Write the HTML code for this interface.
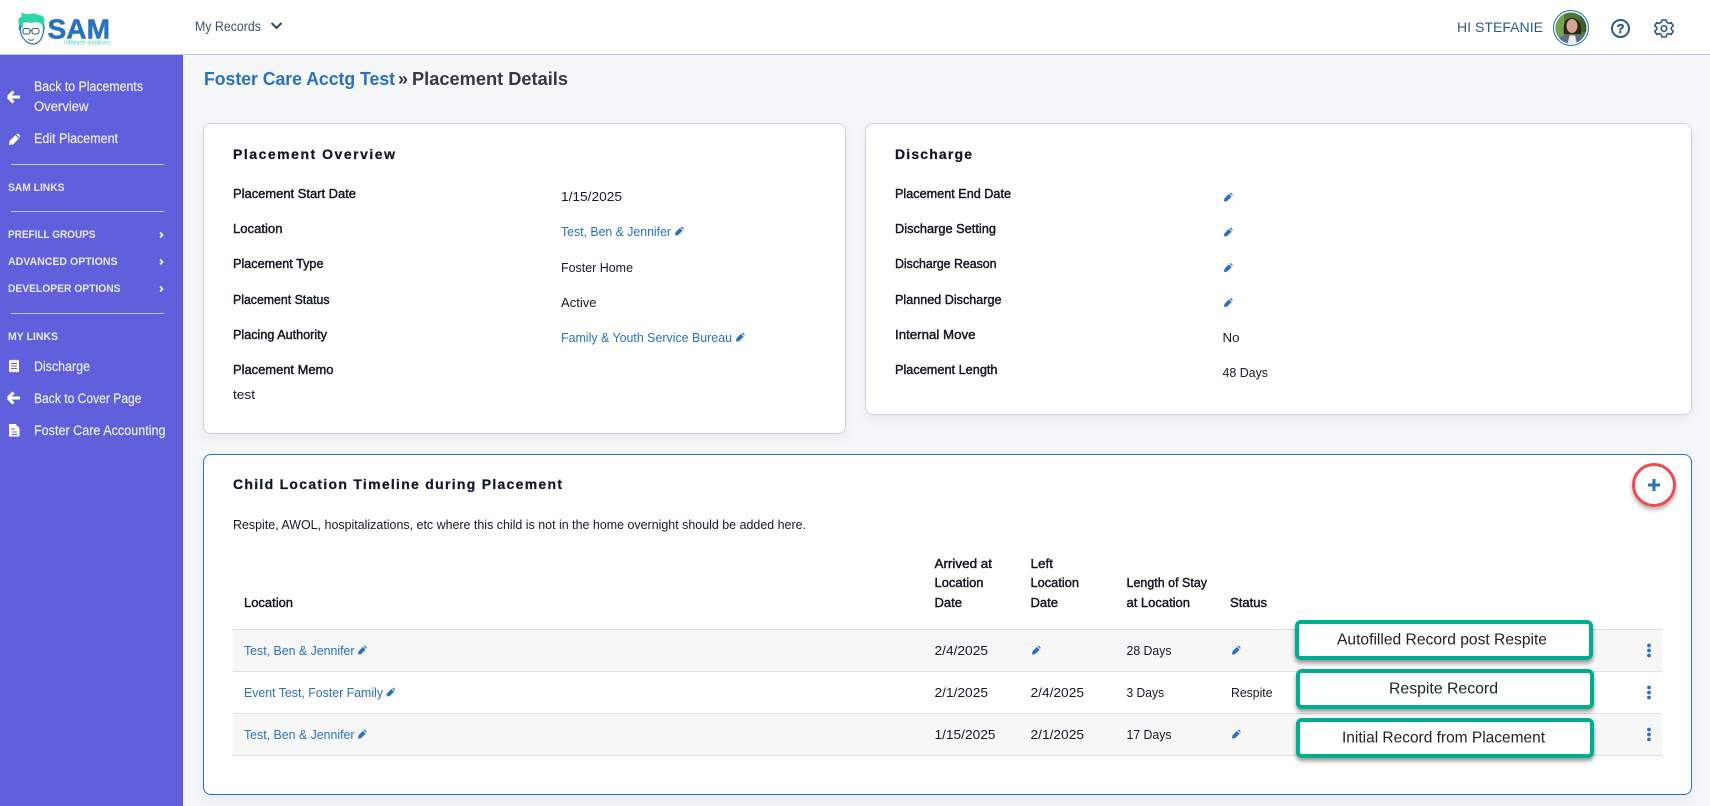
<!DOCTYPE html>
<html lang="en"><head><meta charset="utf-8"><title>Placement Details</title>
<style>
html,body{margin:0;padding:0;width:1710px;height:806px;overflow:hidden;background:#f5f6f8;font-family:"Liberation Sans",sans-serif}
.b{position:absolute;box-sizing:border-box}
.card{background:#fff;border:1px solid #c9d2e2;border-radius:8px;box-shadow:0 4px 10px rgba(60,70,100,.07)}
.g{background:#fff;border:4px solid #00ad8e;border-radius:6px;box-shadow:0 3px 4px rgba(0,0,0,.4)}
svg{position:absolute;left:0;top:0}
text{font-family:"Liberation Sans",sans-serif;font-size:13px;fill:#1b2130}
.n{font-size:13px;fill:#151a26}
.l{font-size:13px;fill:#111622;stroke:#111622;stroke-width:.42}
.h{font-size:14px;font-weight:bold;fill:#12172a;stroke:#12172a;stroke-width:.25}
.a{fill:#2a72bf}
.s{fill:#f0f0fc;font-size:13.5px;stroke:#f0f0fc;stroke-width:.15}
.c{fill:#e8e8f9;font-size:11px;font-weight:bold}
.an{font-size:16px;fill:#222}
</style></head><body>
<div class="b" style="left:0;top:0;width:1710px;height:55px;background:#fff;border-bottom:1px solid #bcc9e0"></div>
<div class="b" style="left:0;top:55px;width:183px;height:751px;background:#6060dd"></div>
<div class="b" style="left:11px;top:164px;width:153px;height:1px;background:#c9c9f2"></div>
<div class="b" style="left:11px;top:211px;width:153px;height:1px;background:#c9c9f2"></div>
<div class="b" style="left:11px;top:313px;width:153px;height:1px;background:#c9c9f2"></div>
<div class="b card" style="left:203px;top:123px;width:643px;height:311px"></div>
<div class="b card" style="left:865px;top:123px;width:827px;height:292px"></div>
<div class="b card" style="left:203px;top:454px;width:1489px;height:341px;border-color:#2a72bf"></div>
<div class="b" style="left:233px;top:629px;width:1429px;height:43px;background:#f7f7f8;border-top:1px solid #dfdfe2;border-bottom:1px solid #dfdfe2"></div>
<div class="b" style="left:233px;top:713px;width:1429px;height:43px;background:#f7f7f8;border-top:1px solid #dfdfe2;border-bottom:1px solid #dfdfe2"></div>
<div class="b g" style="left:1295px;top:620px;width:298px;height:40px"></div>
<div class="b g" style="left:1296px;top:669px;width:298px;height:40px"></div>
<div class="b g" style="left:1296px;top:718px;width:298px;height:40px"></div>
<div class="b" style="left:1632px;top:463px;width:44px;height:44px;border:3px solid #f04a4e;border-radius:50%;box-shadow:0 3px 4px rgba(0,0,0,.3)"></div>
<svg width="1710" height="806" viewBox="0 0 1710 806" xmlns="http://www.w3.org/2000/svg">
<defs>
<symbol id="p" viewBox="0 0 10 10" overflow="visible"><path d="M0 10L.5 6.300 5.800 1 9 4.200 3.700 9.500ZM6.700 .3 7.200 -.2Q7.800 -.5 8.400 -.1L10 1.500Q10.400 2.100 10 2.700L9.700 3.300Z"/></symbol>
<symbol id="k" viewBox="0 0 6 14" overflow="visible"><circle cx="3" cy="2" r="1.9"/><circle cx="3" cy="7" r="1.9"/><circle cx="3" cy="12" r="1.9"/></symbol>
<clipPath id="av"><circle cx="1571" cy="28" r="15.500"/></clipPath>
</defs>

<!-- logo -->
<path d="M21 22Q19 34 24 39Q28 44 33 44Q39 44 42 37Q45 30 43 20Z" fill="#fff" stroke="#2a72bf" stroke-width="1.200"/>
<path d="M19 25Q17 17 22 16.500L21 12Q26 15 30 14Q36 12.500 38 15Q44 15 44 19Q45 23 43 27Q41 22 36 22Q28 24 24 21Q22 25 23 29Z" fill="#2ed6a6"/>
<path d="M20.500 25Q17.500 28 20.500 31M43 25Q45.500 28 43 31" fill="none" stroke="#2a72bf" stroke-width="1"/>
<rect x="23" y="28.500" width="7" height="5.500" rx="2" fill="none" stroke="#2f5a86" stroke-width="1"/>
<rect x="32" y="28.500" width="7" height="5.500" rx="2" fill="none" stroke="#2f5a86" stroke-width="1"/>
<path d="M30 30.500H32M28 39.500Q31 41 34 39.500" fill="none" stroke="#2f5a86" stroke-width=".9"/>
<text x="47.500" y="38.500" textLength="62.500" lengthAdjust="spacingAndGlyphs" style="font-size:28px;font-weight:bold;fill:#2a72bf;stroke:#2a72bf;stroke-width:.5">SAM</text>
<text x="64" y="44.500" textLength="46" lengthAdjust="spacingAndGlyphs" style="font-size:6px;fill:#3fdcb0">InReach solutions</text>

<!-- header -->
<text x="195" y="31" textLength="66" lengthAdjust="spacingAndGlyphs" style="font-size:14px;fill:#3c5470">My Records</text>
<path d="M271.500 23L276.500 28 281.500 23" fill="none" stroke="#2f4a68" stroke-width="2"/>
<text x="1457" y="32" textLength="86" lengthAdjust="spacingAndGlyphs" style="font-size:13.500px;fill:#2f5a86">HI STEFANIE</text>
<circle cx="1571" cy="28" r="17.500" fill="#fff" stroke="#3a7fc8" stroke-width="1.200"/>
<g clip-path="url(#av)">
<rect x="1555" y="12" width="32" height="32" fill="#4f7a35"/>
<rect x="1555" y="12" width="9" height="32" fill="#76a052"/>
<rect x="1580" y="14" width="8" height="18" fill="#3b5f2c"/>
<path d="M1564 34Q1562 18 1572 18Q1582 18 1581 34Z" fill="#2c211c"/>
<ellipse cx="1572" cy="26" rx="5.500" ry="7" fill="#d2a68d"/>
<path d="M1557 44Q1558 36 1566 35L1578 35Q1585 36 1586 44Z" fill="#5b6b94"/>
<path d="M1567.500 44L1569.500 35.500H1575L1577 44Z" fill="#f2ece6"/>
</g>
<circle cx="1620.500" cy="28.500" r="8.500" fill="none" stroke="#2f5a86" stroke-width="2"/>
<text x="1620.500" y="33" text-anchor="middle" style="font-size:13px;font-weight:bold;fill:#2f5a86;stroke:#2f5a86;stroke-width:.4">?</text>
<path d="M1662 20H1666L1666.800 22.300 1669 23.500 1671.300 22.600 1673.200 25.800 1671.300 27.500V29.500L1673.200 31.200 1671.300 34.500 1669 33.500 1666.800 34.700 1666 37H1662L1661.200 34.700 1659 33.500 1656.700 34.500 1654.800 31.200 1656.700 29.500V27.500L1654.800 25.800 1656.700 22.600 1659 23.500 1661.200 22.300Z" fill="none" stroke="#2f5a86" stroke-width="1.600" stroke-linejoin="round"/>
<circle cx="1664" cy="28.500" r="2.800" fill="none" stroke="#2f5a86" stroke-width="1.600"/>

<!-- sidebar -->
<g fill="#fff">
<path d="M8 97L13.500 91.500M8 97L13.500 102.500M8.500 97H20" fill="none" stroke="#fff" stroke-width="3"/>
<use href="#p" x="9" y="134" width="11" height="11"/>
<path d="M9 359.500l1.500 1 1.500-1 1.500 1 1.500-1 1.500 1 1.500-1 1 1V372.500l-1-1-1.500 1-1.500-1-1.500 1-1.500-1-1.500 1-1.500-1Z"/>
<path d="M8 398L13.500 392.500M8 398L13.500 403.500M8.500 398H20" fill="none" stroke="#fff" stroke-width="3"/>
<path d="M9 424H15.500L19.500 428V436.500H9Z"/>
</g>
<path d="M11 363.500H17M11 366H17M11 368.500H17" stroke="#6060dd" stroke-width="1"/>
<path d="M11 429H15M12 432H17M12 434.500H17" stroke="#6060dd" stroke-width="1"/>
<text class="s" x="34" y="91" textLength="109" lengthAdjust="spacingAndGlyphs">Back to Placements</text>
<text class="s" x="34" y="111" textLength="54.500" lengthAdjust="spacingAndGlyphs">Overview</text>
<text class="s" x="34" y="143" textLength="84" lengthAdjust="spacingAndGlyphs">Edit Placement</text>
<text class="c" x="8" y="191" textLength="56.500" lengthAdjust="spacingAndGlyphs">SAM LINKS</text>
<text class="c" x="8" y="238" textLength="87.500" lengthAdjust="spacingAndGlyphs">PREFILL GROUPS</text>
<text class="c" x="8" y="265" textLength="109.500" lengthAdjust="spacingAndGlyphs">ADVANCED OPTIONS</text>
<text class="c" x="8" y="292" textLength="112.500" lengthAdjust="spacingAndGlyphs">DEVELOPER OPTIONS</text>
<text class="c" x="8" y="340" textLength="50" lengthAdjust="spacingAndGlyphs">MY LINKS</text>
<path d="M160 232.500L162.500 235 160 237.500M160 259.500L162.500 262 160 264.500M160 286.500L162.500 289 160 291.500" fill="none" stroke="#eeeefb" stroke-width="1.800"/>
<text class="s" x="34" y="371" textLength="56" lengthAdjust="spacingAndGlyphs">Discharge</text>
<text class="s" x="34" y="403" textLength="107.500" lengthAdjust="spacingAndGlyphs">Back to Cover Page</text>
<text class="s" x="34" y="435" textLength="131.500" lengthAdjust="spacingAndGlyphs">Foster Care Accounting</text>

<!-- title -->
<text x="204" y="85" textLength="191" lengthAdjust="spacingAndGlyphs" style="font-size:18px;font-weight:bold;fill:#2a72bf">Foster Care Acctg Test</text>
<text x="398" y="85" style="font-size:18px;font-weight:bold;fill:#333a45">»</text>
<text x="412" y="85" textLength="156" lengthAdjust="spacingAndGlyphs" style="font-size:18px;font-weight:bold;fill:#333a45">Placement Details</text>

<!-- overview -->
<text class="h" x="233" y="159" textLength="162">Placement Overview</text>
<text class="l" x="233" y="198" textLength="123" lengthAdjust="spacingAndGlyphs">Placement Start Date</text>
<text class="l" x="233" y="233" textLength="49.500" lengthAdjust="spacingAndGlyphs">Location</text>
<text class="l" x="233" y="268" textLength="90.500" lengthAdjust="spacingAndGlyphs">Placement Type</text>
<text class="l" x="233" y="304" textLength="96.500" lengthAdjust="spacingAndGlyphs">Placement Status</text>
<text class="l" x="233" y="339" textLength="94" lengthAdjust="spacingAndGlyphs">Placing Authority</text>
<text class="l" x="233" y="374" textLength="100.500" lengthAdjust="spacingAndGlyphs">Placement Memo</text>
<text class="n" x="233" y="399" textLength="22" lengthAdjust="spacingAndGlyphs">test</text>
<text class="n" x="561" y="201" textLength="61" lengthAdjust="spacingAndGlyphs" style="font-size:12.500px">1/15/2025</text>
<text class="n a" x="561" y="236" textLength="110" lengthAdjust="spacingAndGlyphs">Test, Ben &amp; Jennifer</text>
<use href="#p" x="675" y="227" width="8.500" height="8.500" fill="#2f6fc0"/>
<text class="n" x="561" y="272" textLength="72" lengthAdjust="spacingAndGlyphs">Foster Home</text>
<text class="n" x="561" y="307" textLength="35.500" lengthAdjust="spacingAndGlyphs">Active</text>
<text class="n a" x="561" y="342" textLength="171" lengthAdjust="spacingAndGlyphs">Family &amp; Youth Service Bureau</text>
<use href="#p" x="736" y="333" width="8.500" height="8.500" fill="#2f6fc0"/>

<!-- discharge -->
<text class="h" x="895" y="159" textLength="77">Discharge</text>
<text class="l" x="895" y="198" textLength="116" lengthAdjust="spacingAndGlyphs">Placement End Date</text>
<text class="l" x="895" y="233" textLength="101" lengthAdjust="spacingAndGlyphs">Discharge Setting</text>
<text class="l" x="895" y="268" textLength="101.500" lengthAdjust="spacingAndGlyphs">Discharge Reason</text>
<text class="l" x="895" y="304" textLength="106.500" lengthAdjust="spacingAndGlyphs">Planned Discharge</text>
<text class="l" x="895" y="339" textLength="80.500" lengthAdjust="spacingAndGlyphs">Internal Move</text>
<text class="l" x="895" y="374" textLength="102.500" lengthAdjust="spacingAndGlyphs">Placement Length</text>
<g fill="#2f6fc0">
<use href="#p" x="1224" y="193" width="8.500" height="8.500"/>
<use href="#p" x="1224" y="228" width="8.500" height="8.500"/>
<use href="#p" x="1224" y="263.500" width="8.500" height="8.500"/>
<use href="#p" x="1224" y="298.500" width="8.500" height="8.500"/>
</g>
<text class="n" x="1222.500" y="342" textLength="17" lengthAdjust="spacingAndGlyphs">No</text>
<text class="n" x="1222.500" y="377" textLength="45.500" lengthAdjust="spacingAndGlyphs">48 Days</text>

<!-- timeline -->
<text class="h" x="233" y="489" textLength="329">Child Location Timeline during Placement</text>
<text class="n" x="233" y="529" textLength="573" lengthAdjust="spacingAndGlyphs">Respite, AWOL, hospitalizations, etc where this child is not in the home overnight should be added here.</text>
<text class="l" x="244" y="607" textLength="49" lengthAdjust="spacingAndGlyphs">Location</text>
<text class="l" x="934.500" y="568" textLength="57.500" lengthAdjust="spacingAndGlyphs">Arrived at</text>
<text class="l" x="934.500" y="587" textLength="49" lengthAdjust="spacingAndGlyphs">Location</text>
<text class="l" x="934.500" y="607" textLength="27.500" lengthAdjust="spacingAndGlyphs">Date</text>
<text class="l" x="1030.500" y="568" textLength="22.500" lengthAdjust="spacingAndGlyphs">Left</text>
<text class="l" x="1030.500" y="587" textLength="48.500" lengthAdjust="spacingAndGlyphs">Location</text>
<text class="l" x="1030.500" y="607" textLength="27.500" lengthAdjust="spacingAndGlyphs">Date</text>
<text class="l" x="1126.500" y="587" textLength="80.500" lengthAdjust="spacingAndGlyphs">Length of Stay</text>
<text class="l" x="1126.500" y="607" textLength="63.500" lengthAdjust="spacingAndGlyphs">at Location</text>
<text class="l" x="1230" y="607" textLength="37" lengthAdjust="spacingAndGlyphs">Status</text>

<text class="n a" x="244" y="655" textLength="110.500" lengthAdjust="spacingAndGlyphs">Test, Ben &amp; Jennifer</text>
<use href="#p" x="358" y="646" width="8.500" height="8.500" fill="#2f6fc0"/>
<text class="n" x="934.500" y="655" textLength="53.500" lengthAdjust="spacingAndGlyphs" style="font-size:12.500px">2/4/2025</text>
<use href="#p" x="1032" y="646" width="8.500" height="8.500" fill="#2f6fc0"/>
<text class="n" x="1126.500" y="655" textLength="45" lengthAdjust="spacingAndGlyphs">28 Days</text>
<use href="#p" x="1232" y="646" width="8.500" height="8.500" fill="#2f6fc0"/>
<use href="#k" x="1646" y="643.500" width="6" height="14" fill="#2f6fc0"/>

<text class="n a" x="244" y="697" textLength="139" lengthAdjust="spacingAndGlyphs">Event Test, Foster Family</text>
<use href="#p" x="386.500" y="688" width="8.500" height="8.500" fill="#2f6fc0"/>
<text class="n" x="934.500" y="697" textLength="53.500" lengthAdjust="spacingAndGlyphs" style="font-size:12.500px">2/1/2025</text>
<text class="n" x="1030.500" y="697" textLength="53.500" lengthAdjust="spacingAndGlyphs" style="font-size:12.500px">2/4/2025</text>
<text class="n" x="1126.500" y="697" textLength="37.500" lengthAdjust="spacingAndGlyphs">3 Days</text>
<text class="n" x="1231" y="697" textLength="41.500" lengthAdjust="spacingAndGlyphs">Respite</text>
<use href="#k" x="1646" y="685.500" width="6" height="14" fill="#2f6fc0"/>

<text class="n a" x="244" y="739" textLength="110.500" lengthAdjust="spacingAndGlyphs">Test, Ben &amp; Jennifer</text>
<use href="#p" x="358" y="730" width="8.500" height="8.500" fill="#2f6fc0"/>
<text class="n" x="934.500" y="739" textLength="61" lengthAdjust="spacingAndGlyphs" style="font-size:12.500px">1/15/2025</text>
<text class="n" x="1030.500" y="739" textLength="53.500" lengthAdjust="spacingAndGlyphs" style="font-size:12.500px">2/1/2025</text>
<text class="n" x="1126.500" y="739" textLength="45" lengthAdjust="spacingAndGlyphs">17 Days</text>
<use href="#p" x="1232" y="730" width="8.500" height="8.500" fill="#2f6fc0"/>
<use href="#k" x="1646" y="727.500" width="6" height="14" fill="#2f6fc0"/>

<path d="M1654 479V491M1648 485H1660" stroke="#2a72bf" stroke-width="3"/>
<text class="an" x="1337" y="644.500" textLength="210" lengthAdjust="spacingAndGlyphs">Autofilled Record post Respite</text>
<text class="an" x="1389" y="693.500" textLength="109" lengthAdjust="spacingAndGlyphs">Respite Record</text>
<text class="an" x="1342" y="742.500" textLength="203" lengthAdjust="spacingAndGlyphs">Initial Record from Placement</text>
</svg>
</body></html>
